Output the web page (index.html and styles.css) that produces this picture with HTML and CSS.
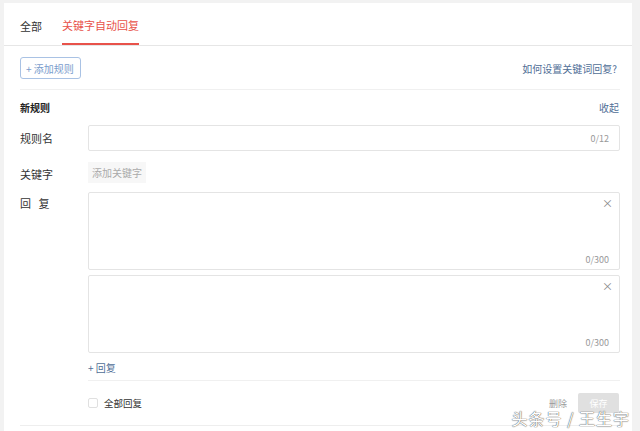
FILE: index.html
```html
<!DOCTYPE html>
<html lang="zh-CN">
<head>
    <meta charset="UTF-8">
    <title>关键字自动回复</title>
    <link rel="stylesheet" href="styles.css">
</head>
<body>
    <div class="card">
        <div class="tabs">
            <span class="tab">全部</span>
            <span class="tab active">关键字自动回复</span>
        </div>
        <div class="main">
            <div class="toolbar">
                <span class="btn-add">+ 添加规则</span>
                <a class="help">如何设置关键词回复?</a>
            </div>
            <div class="rule-head">
                <b>新规则</b>
                <a class="fold">收起</a>
            </div>
            <div class="row name-row">
                <label class="lab">规则名</label>
                <div class="input"><span class="count">0/12</span></div>
            </div>
            <div class="row kw-row">
                <label class="lab">关键字</label>
                <span class="tag">添加关键字</span>
            </div>
            <div class="row reply-row">
                <label class="lab">回&nbsp;&nbsp;&nbsp;复</label>
                <div class="replies">
                    <div class="area"><span class="close">×</span><span class="count">0/300</span></div>
                    <div class="area"><span class="close">×</span><span class="count">0/300</span></div>
                    <a class="add-reply">+ 回复</a>
                </div>
            </div>
            <div class="foot">
                <label class="check"><i class="box"></i>全部回复</label>
                <span class="del">删除</span>
                <span class="save">保存</span>
            </div>
        </div>
        <div class="mark">头条号 / 王生宇</div>
    </div>
</body>
</html>
```

FILE: styles.css
```css
/* 页面底色与卡片 */
body { margin: 0; background-color: #f2f2f2; font-family: "Noto Sans CJK SC", "Liberation Sans", sans-serif; font-size: 11px; color: #333; }
.card { position: relative; margin: 3px 8px 0 4px; height: 428px; background-color: #fff; }

/* 标签页 */
.tabs { display: flex; gap: 20px; height: 42px; padding-left: 16px; border-bottom: 1px solid #e6e6e6; }
.tab { display: flex; align-items: center; height: 42px; box-sizing: border-box; padding-top: 4px; font-size: 11px; color: #333; }
.tab.active { color: #e8524a; border-bottom: 2px solid #e8524a; }

.main { padding: 0 12px 0 16px; }

.toolbar { display: flex; align-items: center; justify-content: space-between; height: 42px; padding-top: 1px; border-bottom: 1px solid #f0f0f0; }
.btn-add { display: flex; align-items: center; height: 20px; padding: 0 6px 0 5px; border: 1px solid #a9c2e4; border-radius: 3px; color: #7a9ccc; font-size: 10px; }
.help { margin-right: 3px; color: #4f6e96; font-size: 10px; }

.rule-head { display: flex; justify-content: space-between; align-items: center; height: 35px; }
.rule-head b { font-size: 10px; color: #222; }
.fold { margin-right: 1px; color: #4f6e96; font-size: 10px; }

.row { display: flex; }
.lab { width: 68px; flex: none; color: #333; font-size: 11px; }
.name-row { align-items: center; height: 26px; }
.input { flex: 1; display: flex; align-items: center; justify-content: flex-end; height: 24px; border: 1px solid #e4e4e4; border-radius: 2px; padding-right: 10px; }
.count { color: #999; font-size: 9px; }

.kw-row { align-items: center; margin-top: 11px; height: 20px; }
.kw-row .lab { padding-top: 3px; }
.tag { padding: 3px 4px; background-color: #f7f7f7; color: #aaa; font-size: 10px; }

.reply-row { margin-top: 10px; }
.reply-row .lab { padding-top: 3px; }
.replies { flex: 1; }
.area { position: relative; height: 76px; margin-bottom: 5px; border: 1px solid #e4e4e4; border-radius: 2px; }
.area + .area { margin-bottom: 0; }
.area .close { position: absolute; top: 2px; right: 6px; color: #888; font-size: 11px; }
.area .count { position: absolute; right: 10px; bottom: 3px; }
.add-reply { display: block; height: 23px; padding-top: 4px; line-height: 22px; color: #4f6e96; font-size: 10px; border-bottom: 1px solid #f0f0f0; }

.foot { display: flex; align-items: center; height: 44px; padding-left: 68px; border-bottom: 1px solid #eee; }
.check { display: flex; align-items: center; gap: 6px; font-size: 9.5px; color: #333; }
.box { width: 8px; height: 8px; border: 1px solid #e0e0e0; border-radius: 2px; }
.del { margin-left: auto; margin-right: 11px; color: #999; font-size: 9px; }
.save { display: flex; align-items: center; justify-content: center; width: 41px; height: 20px; margin-right: 1px; background-color: #e0e0e0; border-radius: 2px; color: #fff; font-size: 9px; }

/* 水印 */
.mark { position: absolute; right: 2px; bottom: 1px; font-size: 16px; color: #fff; letter-spacing: 1px; text-shadow: 0 0 1px #555, 0 0 1px #555; }
```
